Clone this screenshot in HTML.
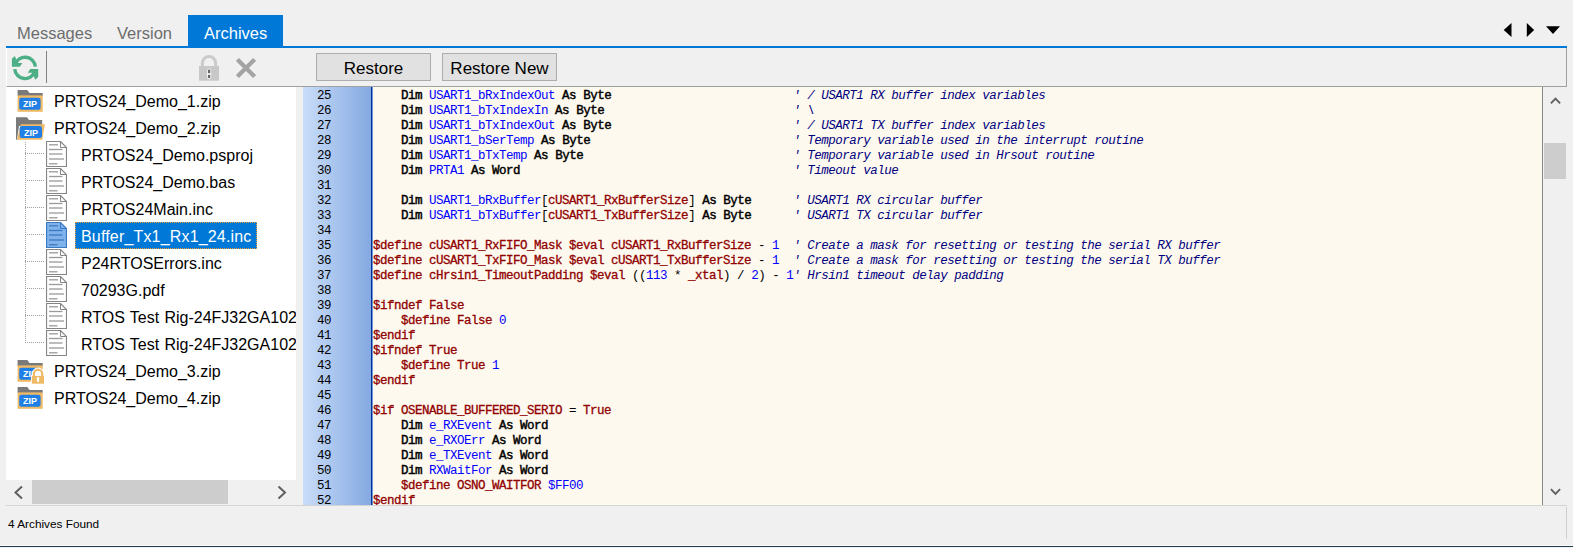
<!DOCTYPE html>
<html><head><meta charset="utf-8"><style>
*{margin:0;padding:0;box-sizing:border-box}
html,body{width:1573px;height:548px;overflow:hidden;background:#f0f0f0;font-family:"Liberation Sans",sans-serif;position:relative}
.a{position:absolute}
.tab{position:absolute;top:18px;height:31px;font-size:16.5px;line-height:31px;color:#6d6d6d;white-space:nowrap}
.btn{position:absolute;top:53px;height:28px;width:115px;background:#e1e1e1;border:1px solid #adadad;font-size:17px;line-height:27px;padding-top:1px;text-align:center;color:#000}
#tree{position:absolute;left:6px;top:87px;width:290px;height:393px;background:#fff;overflow:hidden}
.tt{position:absolute;height:27px;line-height:29px;font-size:16px;color:#000;white-space:nowrap;padding:0 6px}
.tt.sel{width:182px;letter-spacing:0.17px;background:#0078d7;color:#fff;outline:1px dotted #f0a030;outline-offset:-1px}
.tt.ws{word-spacing:0.8px}
.ic{position:absolute;line-height:0}
.ic svg{display:block}
.dh{position:absolute;left:19px;width:20px;height:1px;background-image:linear-gradient(to right,#a0a0a0 50%,transparent 50%);background-size:2px 1px}
#gut{position:absolute;left:303px;top:87px;width:68px;height:418px;background:linear-gradient(to right,#c9ddf9,#84a9e1)}
#edit{position:absolute;left:373px;top:87px;width:1169px;height:418px;background:#fef9ee;overflow:hidden}
.cl,.ln{position:absolute;height:15px;line-height:15px;font-family:"Liberation Mono",monospace;font-size:12.5px;letter-spacing:-0.5px;white-space:pre;color:#000}
.ln{left:14px}
.cl{left:0}
.k{-webkit-text-stroke:0.45px #000}
.v{color:#0000ff}
.r{color:#900000;-webkit-text-stroke:0.3px #900000}
.n{color:#0000ff}
.c{color:#000080;font-style:italic}
</style></head><body>
<div class="tab" style="left:17px">Messages</div>
<div class="tab" style="left:117px">Version</div>
<div class="a" style="left:188px;top:15px;width:95px;height:31px;background:#0078d7"></div>
<div class="tab" style="left:204px;color:#fff">Archives</div>
<div class="a" style="left:6px;top:46px;width:1561px;height:2px;background:#0078d7"></div>
<svg class="a" style="left:1500px;top:20px" width="66" height="20" viewBox="0 0 66 20"><path d="M11.5 3 V17 L3.7 10 Z" fill="#000"/><path d="M26.8 3 V17 L34.2 10 Z" fill="#000"/><path d="M46 6.3 H60 L53 14 Z" fill="#000"/></svg>
<!-- toolbar -->
<div class="a" style="left:6px;top:48px;width:1561px;height:39px;border-right:1px solid #a0a0a0;border-bottom:1px solid #a0a0a0;border-left:1px solid #fff"></div>
<svg class="a" style="left:10px;top:53px" width="30" height="30" viewBox="0 0 30 30">
<path d="M25.35 13.7 A10.3 10.3 0 0 0 5.2 11.6" fill="none" stroke="#4caf86" stroke-width="3.4"/>
<path d="M4.8 3.0 L1.9 5.7 L1.9 13.7 L9.9 13.7 L12.3 10.1 L7.9 10.1 Z" fill="#4caf86"/>
<path d="M4.75 16.1 A10.3 10.3 0 0 0 24.9 18.2" fill="none" stroke="#4caf86" stroke-width="3.4"/>
<path d="M25.3 26.8 L28.2 24.1 L28.2 16.1 L20.2 16.1 L17.8 19.7 L22.2 19.7 Z" fill="#4caf86"/>
</svg>
<div class="a" style="left:46px;top:51px;width:1px;height:32px;background:#808080"></div>
<svg class="a" style="left:196px;top:53px" width="26" height="30" viewBox="0 0 26 30">
<path d="M6.4 13.5 V10.1 A6.6 6.6 0 0 1 19.6 10.1 V13.5" fill="none" stroke="#cbcbcb" stroke-width="3"/>
<rect x="3" y="13" width="20" height="14.7" fill="#c8c8c8"/>
<rect x="11.1" y="15.6" width="4" height="10.6" rx="2" fill="#fff"/>
<rect x="11.9" y="16.6" width="2.4" height="3.6" fill="#666"/>
<rect x="11.9" y="21.8" width="2.4" height="3.3" fill="#666"/>
</svg>
<svg class="a" style="left:232px;top:54px" width="28" height="28" viewBox="0 0 28 28"><path d="M5.4 5.4 L22.6 22.6 M22.6 5.4 L5.4 22.6" stroke="#a3a3a3" stroke-width="4.3"/></svg>
<div class="btn" style="left:316px">Restore</div>
<div class="btn" style="left:442px">Restore New</div>
<!-- tree -->
<div id="tree">
<div class="a" style="left:19px;top:55px;width:1px;height:201px;background-image:linear-gradient(to bottom,#a0a0a0 50%,transparent 50%);background-size:1px 2px"></div>
<div class="ic" style="left:11px;top:3px"><svg width="27" height="23" viewBox="0 0 27 23"><path d="M0.6 0 H10.3 L12.5 3 H25.7 V6 H0.6 Z" fill="#7a7a7a"/><rect x="0.6" y="5.4" width="25.1" height="16.4" fill="#efb965"/><rect x="2.2" y="7.8" width="21.4" height="11.9" rx="2.2" fill="#1f7fe6"/><text x="12.9" y="17.1" font-family="Liberation Sans" font-weight="bold" font-size="9" fill="#fff" text-anchor="middle">ZIP</text></svg></div><div class="tt" style="left:42px;top:0px">PRTOS24_Demo_1.zip</div>
<div class="ic" style="left:10px;top:27px"><svg width="30" height="27" viewBox="0 0 30 27"><path d="M0 3.2 H11 L13 6 H26.2 V12 H3 L1 25.7 H0 Z" fill="#7a7a7a"/><path d="M1.1 25.7 L4.7 10.3 H28.9 L26.2 25.7 Z" fill="#efb965"/><rect x="3.7" y="12" width="22.3" height="12" rx="2.2" fill="#1f7fe6"/><text x="14.9" y="21.6" font-family="Liberation Sans" font-weight="bold" font-size="9" fill="#fff" text-anchor="middle">ZIP</text></svg></div><div class="tt" style="left:42px;top:27px">PRTOS24_Demo_2.zip</div>
<div class="ic" style="left:40px;top:54px"><svg width="21" height="27" viewBox="0 0 21 27"><path d="M0.5 0.5 H14.5 L20.5 6.5 V25.5 H0.5 Z" fill="#fff" stroke="#858585" stroke-width="1.2"/><path d="M14.5 0.5 V6.5 H20.5" fill="none" stroke="#858585" stroke-width="1"/><g stroke="#9a9a9a" stroke-width="1.3"><line x1="3" y1="3.8" x2="12" y2="3.8"/><line x1="3" y1="8.5" x2="16.5" y2="8.5"/><line x1="3" y1="13" x2="16.5" y2="13"/><line x1="3" y1="18" x2="18" y2="18"/><line x1="3" y1="22.8" x2="11.5" y2="22.8"/></g></svg></div><div class="tt" style="left:69px;top:54px">PRTOS24_Demo.psproj</div>
<div class="dh" style="top:66px"></div><div class="ic" style="left:40px;top:81px"><svg width="21" height="27" viewBox="0 0 21 27"><path d="M0.5 0.5 H14.5 L20.5 6.5 V25.5 H0.5 Z" fill="#fff" stroke="#858585" stroke-width="1.2"/><path d="M14.5 0.5 V6.5 H20.5" fill="none" stroke="#858585" stroke-width="1"/><g stroke="#9a9a9a" stroke-width="1.3"><line x1="3" y1="3.8" x2="12" y2="3.8"/><line x1="3" y1="8.5" x2="16.5" y2="8.5"/><line x1="3" y1="13" x2="16.5" y2="13"/><line x1="3" y1="18" x2="18" y2="18"/><line x1="3" y1="22.8" x2="11.5" y2="22.8"/></g></svg></div><div class="tt" style="left:69px;top:81px">PRTOS24_Demo.bas</div>
<div class="dh" style="top:93px"></div><div class="ic" style="left:40px;top:108px"><svg width="21" height="27" viewBox="0 0 21 27"><path d="M0.5 0.5 H14.5 L20.5 6.5 V25.5 H0.5 Z" fill="#fff" stroke="#858585" stroke-width="1.2"/><path d="M14.5 0.5 V6.5 H20.5" fill="none" stroke="#858585" stroke-width="1"/><g stroke="#9a9a9a" stroke-width="1.3"><line x1="3" y1="3.8" x2="12" y2="3.8"/><line x1="3" y1="8.5" x2="16.5" y2="8.5"/><line x1="3" y1="13" x2="16.5" y2="13"/><line x1="3" y1="18" x2="18" y2="18"/><line x1="3" y1="22.8" x2="11.5" y2="22.8"/></g></svg></div><div class="tt" style="left:69px;top:108px">PRTOS24Main.inc</div>
<div class="dh" style="top:120px"></div><div class="ic" style="left:40px;top:135px"><svg width="21" height="27" viewBox="0 0 21 27"><path d="M0.5 0.5 H14.5 L20.5 6.5 V25.5 H0.5 Z" fill="#7fb3ea" stroke="#3b78c2" stroke-width="1.2"/><path d="M14.5 0.5 V6.5 H20.5" fill="none" stroke="#3b78c2" stroke-width="1"/><g stroke="#3b78c2" stroke-width="1.3"><line x1="3" y1="3.8" x2="12" y2="3.8"/><line x1="3" y1="8.5" x2="16.5" y2="8.5"/><line x1="3" y1="13" x2="16.5" y2="13"/><line x1="3" y1="18" x2="18" y2="18"/><line x1="3" y1="22.8" x2="11.5" y2="22.8"/></g></svg></div><div class="tt sel" style="left:69px;top:135px">Buffer_Tx1_Rx1_24.inc</div>
<div class="dh" style="top:147px"></div><div class="ic" style="left:40px;top:162px"><svg width="21" height="27" viewBox="0 0 21 27"><path d="M0.5 0.5 H14.5 L20.5 6.5 V25.5 H0.5 Z" fill="#fff" stroke="#858585" stroke-width="1.2"/><path d="M14.5 0.5 V6.5 H20.5" fill="none" stroke="#858585" stroke-width="1"/><g stroke="#9a9a9a" stroke-width="1.3"><line x1="3" y1="3.8" x2="12" y2="3.8"/><line x1="3" y1="8.5" x2="16.5" y2="8.5"/><line x1="3" y1="13" x2="16.5" y2="13"/><line x1="3" y1="18" x2="18" y2="18"/><line x1="3" y1="22.8" x2="11.5" y2="22.8"/></g></svg></div><div class="tt" style="left:69px;top:162px">P24RTOSErrors.inc</div>
<div class="dh" style="top:174px"></div><div class="ic" style="left:40px;top:189px"><svg width="21" height="27" viewBox="0 0 21 27"><path d="M0.5 0.5 H14.5 L20.5 6.5 V25.5 H0.5 Z" fill="#fff" stroke="#858585" stroke-width="1.2"/><path d="M14.5 0.5 V6.5 H20.5" fill="none" stroke="#858585" stroke-width="1"/><g stroke="#9a9a9a" stroke-width="1.3"><line x1="3" y1="3.8" x2="12" y2="3.8"/><line x1="3" y1="8.5" x2="16.5" y2="8.5"/><line x1="3" y1="13" x2="16.5" y2="13"/><line x1="3" y1="18" x2="18" y2="18"/><line x1="3" y1="22.8" x2="11.5" y2="22.8"/></g></svg></div><div class="tt" style="left:69px;top:189px">70293G.pdf</div>
<div class="dh" style="top:201px"></div><div class="ic" style="left:40px;top:216px"><svg width="21" height="27" viewBox="0 0 21 27"><path d="M0.5 0.5 H14.5 L20.5 6.5 V25.5 H0.5 Z" fill="#fff" stroke="#858585" stroke-width="1.2"/><path d="M14.5 0.5 V6.5 H20.5" fill="none" stroke="#858585" stroke-width="1"/><g stroke="#9a9a9a" stroke-width="1.3"><line x1="3" y1="3.8" x2="12" y2="3.8"/><line x1="3" y1="8.5" x2="16.5" y2="8.5"/><line x1="3" y1="13" x2="16.5" y2="13"/><line x1="3" y1="18" x2="18" y2="18"/><line x1="3" y1="22.8" x2="11.5" y2="22.8"/></g></svg></div><div class="tt ws" style="left:69px;top:216px">RTOS Test Rig-24FJ32GA102.pdf</div>
<div class="dh" style="top:228px"></div><div class="ic" style="left:40px;top:243px"><svg width="21" height="27" viewBox="0 0 21 27"><path d="M0.5 0.5 H14.5 L20.5 6.5 V25.5 H0.5 Z" fill="#fff" stroke="#858585" stroke-width="1.2"/><path d="M14.5 0.5 V6.5 H20.5" fill="none" stroke="#858585" stroke-width="1"/><g stroke="#9a9a9a" stroke-width="1.3"><line x1="3" y1="3.8" x2="12" y2="3.8"/><line x1="3" y1="8.5" x2="16.5" y2="8.5"/><line x1="3" y1="13" x2="16.5" y2="13"/><line x1="3" y1="18" x2="18" y2="18"/><line x1="3" y1="22.8" x2="11.5" y2="22.8"/></g></svg></div><div class="tt ws" style="left:69px;top:243px">RTOS Test Rig-24FJ32GA102.X.zip</div>
<div class="dh" style="top:255px"></div><div class="ic" style="left:11px;top:273px"><svg width="29" height="26" viewBox="0 0 29 26"><path d="M0.6 0 H10.3 L12.5 3 H25.7 V6 H0.6 Z" fill="#7a7a7a"/><rect x="0.6" y="5.4" width="25.1" height="16.4" fill="#efb965"/><rect x="2.2" y="7.8" width="21.4" height="11.9" rx="2.2" fill="#1f7fe6"/><text x="12.9" y="17.1" font-family="Liberation Sans" font-weight="bold" font-size="9" fill="#fff" text-anchor="middle">ZIP</text><path d="M16.9 16.5 V13.85 A4.15 4.15 0 0 1 25.2 13.85 V16.5" fill="#fff" stroke="#fff" stroke-width="4.2"/><rect x="13.9" y="15" width="14.1" height="9.7" fill="#fff"/><path d="M16.9 16.5 V13.85 A4.15 4.15 0 0 1 25.2 13.85 V16.5" fill="none" stroke="#efb965" stroke-width="2.2"/><rect x="14.9" y="16" width="12.1" height="7.7" fill="#efb965"/><rect x="19.9" y="17.1" width="2.3" height="5" rx="1" fill="#fff"/></svg></div><div class="tt" style="left:42px;top:270px">PRTOS24_Demo_3.zip</div>
<div class="ic" style="left:11px;top:300px"><svg width="27" height="23" viewBox="0 0 27 23"><path d="M0.6 0 H10.3 L12.5 3 H25.7 V6 H0.6 Z" fill="#7a7a7a"/><rect x="0.6" y="5.4" width="25.1" height="16.4" fill="#efb965"/><rect x="2.2" y="7.8" width="21.4" height="11.9" rx="2.2" fill="#1f7fe6"/><text x="12.9" y="17.1" font-family="Liberation Sans" font-weight="bold" font-size="9" fill="#fff" text-anchor="middle">ZIP</text></svg></div><div class="tt" style="left:42px;top:297px">PRTOS24_Demo_4.zip</div>

</div>
<!-- hscroll -->
<div class="a" style="left:6px;top:480px;width:290px;height:24px;background:#f0f0f0"></div>
<div class="a" style="left:32px;top:480px;width:196px;height:24px;background:#cdcdcd"></div>
<svg class="a" style="left:10px;top:484px" width="18" height="18" viewBox="0 0 18 18"><path d="M12 2.5 L5.5 8.5 L12 14.5" fill="none" stroke="#606060" stroke-width="2"/></svg>
<svg class="a" style="left:273px;top:484px" width="18" height="18" viewBox="0 0 18 18"><path d="M5.5 2.5 L12 8.5 L5.5 14.5" fill="none" stroke="#606060" stroke-width="2"/></svg>
<!-- gutter & editor -->
<div class="a" style="left:296px;top:87px;width:7px;height:418px;background:#f0f0f0"></div>
<div id="gut"><div class="ln" style="top:2px">25</div><div class="ln" style="top:17px">26</div><div class="ln" style="top:32px">27</div><div class="ln" style="top:47px">28</div><div class="ln" style="top:62px">29</div><div class="ln" style="top:77px">30</div><div class="ln" style="top:92px">31</div><div class="ln" style="top:107px">32</div><div class="ln" style="top:122px">33</div><div class="ln" style="top:137px">34</div><div class="ln" style="top:152px">35</div><div class="ln" style="top:167px">36</div><div class="ln" style="top:182px">37</div><div class="ln" style="top:197px">38</div><div class="ln" style="top:212px">39</div><div class="ln" style="top:227px">40</div><div class="ln" style="top:242px">41</div><div class="ln" style="top:257px">42</div><div class="ln" style="top:272px">43</div><div class="ln" style="top:287px">44</div><div class="ln" style="top:302px">45</div><div class="ln" style="top:317px">46</div><div class="ln" style="top:332px">47</div><div class="ln" style="top:347px">48</div><div class="ln" style="top:362px">49</div><div class="ln" style="top:377px">50</div><div class="ln" style="top:392px">51</div><div class="ln" style="top:407px">52</div></div>
<div class="a" style="left:371px;top:87px;width:1px;height:418px;background:#00309a"></div>
<div class="a" style="left:372px;top:87px;width:1px;height:418px;background:#6d96d8"></div>
<div id="edit"><div class="cl" style="top:2px">    <span class="k">Dim</span> <span class="v">USART1_bRxIndexOut</span> <span class="k">As</span> <span class="k">Byte</span>                          <span class="c">&#x27; / USART1 RX buffer index variables</span></div>
<div class="cl" style="top:17px">    <span class="k">Dim</span> <span class="v">USART1_bTxIndexIn</span> <span class="k">As</span> <span class="k">Byte</span>                           <span class="c">&#x27; \</span></div>
<div class="cl" style="top:32px">    <span class="k">Dim</span> <span class="v">USART1_bTxIndexOut</span> <span class="k">As</span> <span class="k">Byte</span>                          <span class="c">&#x27; / USART1 TX buffer index variables</span></div>
<div class="cl" style="top:47px">    <span class="k">Dim</span> <span class="v">USART1_bSerTemp</span> <span class="k">As</span> <span class="k">Byte</span>                             <span class="c">&#x27; Temporary variable used in the interrupt routine</span></div>
<div class="cl" style="top:62px">    <span class="k">Dim</span> <span class="v">USART1_bTxTemp</span> <span class="k">As</span> <span class="k">Byte</span>                              <span class="c">&#x27; Temporary variable used in Hrsout routine</span></div>
<div class="cl" style="top:77px">    <span class="k">Dim</span> <span class="v">PRTA1</span> <span class="k">As</span> <span class="k">Word</span>                                       <span class="c">&#x27; Timeout value</span></div>
<div class="cl" style="top:92px"></div>
<div class="cl" style="top:107px">    <span class="k">Dim</span> <span class="v">USART1_bRxBuffer</span>[<span class="r">cUSART1_RxBufferSize</span>] <span class="k">As</span> <span class="k">Byte</span>      <span class="c">&#x27; USART1 RX circular buffer</span></div>
<div class="cl" style="top:122px">    <span class="k">Dim</span> <span class="v">USART1_bTxBuffer</span>[<span class="r">cUSART1_TxBufferSize</span>] <span class="k">As</span> <span class="k">Byte</span>      <span class="c">&#x27; USART1 TX circular buffer</span></div>
<div class="cl" style="top:137px"></div>
<div class="cl" style="top:152px"><span class="r">$define cUSART1_RxFIFO_Mask $eval cUSART1_RxBufferSize</span> - <span class="n">1</span>  <span class="c">&#x27; Create a mask for resetting or testing the serial RX buffer</span></div>
<div class="cl" style="top:167px"><span class="r">$define cUSART1_TxFIFO_Mask $eval cUSART1_TxBufferSize</span> - <span class="n">1</span>  <span class="c">&#x27; Create a mask for resetting or testing the serial TX buffer</span></div>
<div class="cl" style="top:182px"><span class="r">$define cHrsin1_TimeoutPadding $eval </span>((<span class="n">113</span> * <span class="r">_xtal</span>) / <span class="n">2</span>) - <span class="n">1</span><span class="c">&#x27; Hrsin1 timeout delay padding</span></div>
<div class="cl" style="top:197px"></div>
<div class="cl" style="top:212px"><span class="r">$ifndef False</span></div>
<div class="cl" style="top:227px">    <span class="r">$define False </span><span class="n">0</span></div>
<div class="cl" style="top:242px"><span class="r">$endif</span></div>
<div class="cl" style="top:257px"><span class="r">$ifndef True</span></div>
<div class="cl" style="top:272px">    <span class="r">$define True </span><span class="n">1</span></div>
<div class="cl" style="top:287px"><span class="r">$endif</span></div>
<div class="cl" style="top:302px"></div>
<div class="cl" style="top:317px"><span class="r">$if OSENABLE_BUFFERED_SERIO</span> = <span class="r">True</span></div>
<div class="cl" style="top:332px">    <span class="k">Dim</span> <span class="v">e_RXEvent</span> <span class="k">As</span> <span class="k">Word</span></div>
<div class="cl" style="top:347px">    <span class="k">Dim</span> <span class="v">e_RXOErr</span> <span class="k">As</span> <span class="k">Word</span></div>
<div class="cl" style="top:362px">    <span class="k">Dim</span> <span class="v">e_TXEvent</span> <span class="k">As</span> <span class="k">Word</span></div>
<div class="cl" style="top:377px">    <span class="k">Dim</span> <span class="v">RXWaitFor</span> <span class="k">As</span> <span class="k">Word</span></div>
<div class="cl" style="top:392px">    <span class="r">$define OSNO_WAITFOR </span><span class="n">$FF00</span></div>
<div class="cl" style="top:407px"><span class="r">$endif</span></div>
</div>
<div class="a" style="left:1542px;top:87px;width:1px;height:418px;background:#8a8a8a"></div>
<!-- vscroll -->
<div class="a" style="left:1544px;top:143px;width:22px;height:36px;background:#cdcdcd"></div>
<svg class="a" style="left:1546px;top:92px" width="18" height="16" viewBox="0 0 18 16"><path d="M4.9 11.3 L9.5 6.7 L14.1 11.3" fill="none" stroke="#606060" stroke-width="1.9"/></svg>
<svg class="a" style="left:1546px;top:484px" width="18" height="16" viewBox="0 0 18 16"><path d="M4.9 5.2 L9.5 9.8 L14.1 5.2" fill="none" stroke="#606060" stroke-width="1.9"/></svg>
<!-- status -->
<div class="a" style="left:6px;top:505px;width:1561px;height:1px;background:#d4d4d4"></div>
<div class="a" style="left:1566px;top:507px;width:1px;height:32px;background:#d0d0d0"></div>
<div class="a" style="left:8px;top:516px;font-size:11.8px;line-height:16px;color:#000;white-space:nowrap">4 Archives Found</div>
<div class="a" style="left:0;top:545px;width:1573px;height:1px;background:#fafafa"></div><div class="a" style="left:0;top:546px;width:1573px;height:1px;background:#22404e"></div>
</body></html>
